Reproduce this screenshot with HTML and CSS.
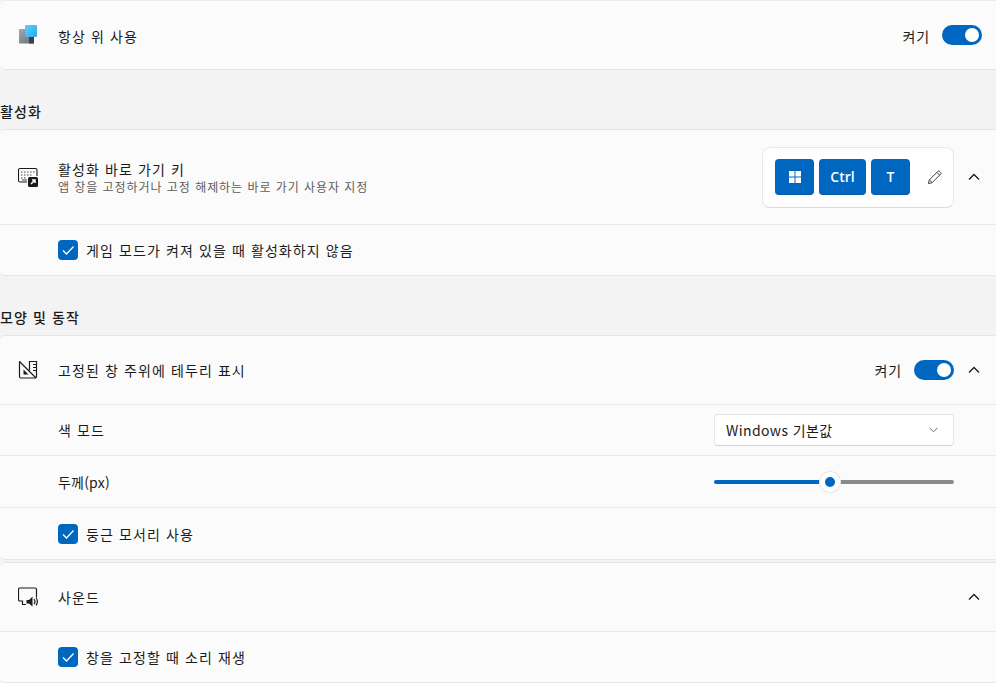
FILE: index.html
```html
<!DOCTYPE html>
<html lang="ko">
<head>
<meta charset="utf-8">
<title>항상 위 사용</title>
<link rel="stylesheet" href="styles.css">
</head>
<body>
<main class="page">
  <section class="card first">
    <div class="row h68">
      <svg class="icon" viewBox="0 0 20 20"><defs><linearGradient id="g1" x1="0" y1="0" x2="1" y2="1"><stop offset="0" stop-color="#a3a8ad"/><stop offset="1" stop-color="#6a6e73"/></linearGradient><linearGradient id="g2" x1="0" y1="0" x2="1" y2="1"><stop offset="0" stop-color="#5fd0fb"/><stop offset="1" stop-color="#2aa8ec"/></linearGradient></defs><rect x="1" y="4" width="15" height="14.500" rx="1" fill="url(#g1)"/><rect x="11" y="11" width="5" height="7.500" fill="#3d3f42"/><rect x="7" y="0" width="12" height="12" rx="1" fill="url(#g2)"/></svg>
      <span class="title nudge">항상 위 사용</span>
      <span class="spacer"></span>
      <span class="state nudge">켜기</span>
      <span class="toggle end"></span>
    </div>
  </section>

  <h2 class="heading">활성화</h2>
  <section class="card">
    <div class="row h95 line">
      <svg class="icon" viewBox="0 0 20 20" fill="none"><path d="M9 15H2a1.500 1.500 0 0 1-1.500-1.500V3A1.500 1.500 0 0 1 2 1.500h15.500A1.500 1.500 0 0 1 19 3v6" stroke="#1b1b1b" stroke-width="1.100"/><path d="M3 5h1.500M6 5h1.500M9 5h1.500M12 5h1.500M15 5h1.500M3 8h1.500M6 8h1.500M9 8h1.500M12 8h1.500M3 11h1.500M6 11h1.500M4 13h5" stroke="#444"/><rect x="10" y="10" width="10" height="10" rx="1.500" fill="#1b1b1b"/><path d="M13 17l4-4M14 13h3v3" stroke="#fff" stroke-width="1.500"/></svg>
      <div class="stack">
        <span class="title">활성화 바로 가기 키</span>
        <span class="sub">앱 창을 고정하거나 고정 해제하는 바로 가기 사용자 지정</span>
      </div>
      <span class="spacer"></span>
      <div class="keys">
        <span class="key k39"><svg class="win" viewBox="0 0 12 12"><path d="M0 0h5.500v5.500H0zM6.500 0H12v5.500H6.500zM0 6.500h5.500V12H0zM6.500 6.500H12V12H6.500z" fill="#fff"/></svg></span>
        <span class="key k47">Ctrl</span>
        <span class="key k39">T</span>
        <svg class="pencil" viewBox="0 0 16 16" fill="none"><path d="M1.500 14.500l1-4L11.500 1.500a1.400 1.400 0 0 1 2 0l1 1a1.400 1.400 0 0 1 0 2L5.500 13.500zM2.500 10.500l3 3M10.500 2.500l3 3" stroke="#333"/></svg>
      </div>
      <svg class="chev" viewBox="0 0 12 8" fill="none"><path d="M1 6.500l5-5 5 5" stroke="#1b1b1b" stroke-width="1.300"/></svg>
    </div>
    <div class="row h50 sub-row">
      <span class="check"><svg viewBox="0 0 20 20" fill="none"><path d="M5 10.500l3.500 3.500 7-7.500" stroke="#fff" stroke-width="1.300"/></svg></span>
      <span class="title">게임 모드가 켜져 있을 때 활성화하지 않음</span>
    </div>
  </section>

  <h2 class="heading">모양 및 동작</h2>
  <section class="card">
    <div class="row h69 line">
      <svg class="icon" viewBox="0 0 20 20" fill="none"><path d="M1.500 1.500v15a1.500 1.500 0 0 0 1.500 1.500h14a1.500 1.500 0 0 0 1.500-1.500v-15h-7v9" stroke="#1b1b1b" stroke-width="1.200"/><path d="M1.500 1.500l16.500 16.500M15 4.500h3M15 7.500h3M15 10.500h3" stroke="#1b1b1b" stroke-width="1.200"/><path d="M5.500 9.500l5 5h-5z" fill="#1b1b1b"/></svg>
      <span class="title">고정된 창 주위에 테두리 표시</span>
      <span class="spacer"></span>
      <span class="state">켜기</span>
      <span class="toggle"></span>
      <svg class="chev" viewBox="0 0 12 8" fill="none"><path d="M1 6.500l5-5 5 5" stroke="#1b1b1b" stroke-width="1.300"/></svg>
    </div>
    <div class="row h51 line plain">
      <span class="title">색 모드</span>
      <span class="spacer"></span>
      <div class="select"><span>Windows 기본값</span><svg class="small-chev" viewBox="0 0 10 6" fill="none"><path d="M.5 .5L5 5 9.500 .5" stroke="#555"/></svg></div>
    </div>
    <div class="row h52 line plain">
      <span class="title narrow">두께(px)</span>
      <span class="spacer"></span>
      <div class="slider"><span class="fill"></span><span class="thumb"></span><span class="rest"></span></div>
    </div>
    <div class="row h51 sub-row">
      <span class="check"><svg viewBox="0 0 20 20" fill="none"><path d="M5 10.500l3.500 3.500 7-7.500" stroke="#fff" stroke-width="1.300"/></svg></span>
      <span class="title">둥근 모서리 사용</span>
    </div>
  </section>

  <section class="card next">
    <div class="row h69 line">
      <svg class="icon" viewBox="0 0 20 20" fill="none"><path d="M18.500 10V2.500A1.500 1.500 0 0 0 17 1H2A1.500 1.500 0 0 0 .5 2.500v10A1.500 1.500 0 0 0 2 14h2.500v3.500H8" stroke="#1b1b1b" stroke-width="1.200"/><path d="M8.500 13h2.500l3.500-3.500V19.500L11 16.500H8.500z" fill="#1b1b1b"/><path d="M16 12a4 4 0 0 1 0 5M18 10.500a7 7 0 0 1 0 8" stroke="#1b1b1b" stroke-width="1.200"/></svg>
      <span class="title">사운드</span>
      <span class="spacer"></span>
      <svg class="chev" viewBox="0 0 12 8" fill="none"><path d="M1 6.500l5-5 5 5" stroke="#1b1b1b" stroke-width="1.300"/></svg>
    </div>
    <div class="row h50 sub-row">
      <span class="check"><svg viewBox="0 0 20 20" fill="none"><path d="M5 10.500l3.500 3.500 7-7.500" stroke="#fff" stroke-width="1.300"/></svg></span>
      <span class="title">창을 고정할 때 소리 재생</span>
    </div>
  </section>
</main>
</body>
</html>
```
FILE: styles.css
```css
* { box-sizing: border-box; }
html, body { margin: 0; height: 683px; overflow: hidden; }
body {
  background: #f3f3f3;
  color: #1b1b1b;
  font-family: "Noto Sans CJK KR", "Noto Sans", sans-serif;
  font-size: 14px;
}
.page { width: 1010px; }
.card {
  background: #fbfbfb;
  border: 1px solid #e6e6e6;
  border-left: 0;
  border-radius: 5px;
}
.card.first { border-top-color: #ececec; }
.card.next { margin-top: 2px; }
.row {
  display: flex;
  align-items: center;
  padding-left: 18px;
  padding-right: 14px;
}
.h50 { height: 50px; }
.h51 { height: 51px; }
.h52 { height: 52px; }
.h68 { height: 68px; }
.h69 { height: 69px; }
.h95 { height: 95px; }
.line { border-bottom: 1px solid #e8e8e8; }
.plain, .sub-row { padding-left: 58px; }
.heading {
  margin: 0;
  height: 59px;
  padding-top: 31px;
  font-size: 14px;
  font-weight: 500;
  line-height: 20px;
  letter-spacing: 1.1px;
}
.icon { width: 20px; height: 20px; flex: none; margin-right: 20px; }
.title { letter-spacing: 1.1px; line-height: 20px; font-size: 14px; white-space: nowrap; }
.narrow { letter-spacing: .2px; }
.nudge { padding-top: 1px; }
.stack { display: flex; flex-direction: column; }
.stack .title { line-height: 19px; }
.sub { font-size: 12px; line-height: 15px; color: #5d5d5d; letter-spacing: .95px; white-space: nowrap; }
.spacer { flex: 1; }
.state { letter-spacing: .9px; margin-right: 12px; }
.toggle {
  width: 40px;
  height: 20px;
  border-radius: 10px;
  background: #0067c0;
  position: relative;
  flex: none;
}
.toggle::after {
  content: "";
  position: absolute;
  right: 3px;
  top: 3px;
  width: 14px;
  height: 14px;
  border-radius: 50%;
  background: #fff;
}
.toggle.end { margin-right: 13px; }
.chev { width: 12px; height: 8px; flex: none; margin: 0 15px 0 14px; }
.keys {
  display: flex;
  align-items: center;
  width: 192px;
  height: 61px;
  padding-left: 12px;
  gap: 5px;
  background: #fff;
  border: 1px solid #e8e8e8;
  border-bottom-color: #dcdcdc;
  border-radius: 8px;
}
.key {
  height: 36px;
  display: flex;
  align-items: center;
  justify-content: center;
  background: #0067c0;
  border-radius: 4px;
  border-bottom: 1px solid #0a5aa5;
  color: #fff;
  font-family: "Open Sans", "Noto Sans", sans-serif;
  font-weight: 600;
  font-size: 14px;
}
.k39 { width: 39px; }
.k47 { width: 47px; }
.win { width: 12px; height: 12px; }
.pencil { width: 15px; height: 15px; margin-left: 12px; }
.check {
  width: 20px;
  height: 20px;
  flex: none;
  background: #0067c0;
  border-radius: 4px;
  margin-right: 8px;
}
.check svg { display: block; width: 20px; height: 20px; }
.select {
  width: 240px;
  height: 32px;
  margin-right: 41px;
  padding: 0 15px 0 11px;
  display: flex;
  align-items: center;
  justify-content: space-between;
  background: #fff;
  border: 1px solid #e6e6e6;
  border-bottom-color: #d2d2d2;
  border-radius: 4px;
  letter-spacing: .4px;
}
.small-chev { width: 9px; height: 6px; }
.slider {
  width: 240px;
  margin-right: 41px;
  display: flex;
  align-items: center;
}
.fill { width: 106px; height: 4px; background: #0067c0; border-radius: 2px 0 0 2px; }
.rest { flex: 1; height: 4px; background: #8a8a8a; border-radius: 0 2px 2px 0; }
.thumb {
  width: 20px;
  height: 20px;
  border-radius: 50%;
  background: #fff;
  border: 5px solid #fff;
  box-shadow: 0 0 0 1px #e8e8e8;
  position: relative;
  flex: none;
}
.thumb::after {
  content: "";
  position: absolute;
  inset: 0;
  border-radius: 50%;
  background: #0067c0;
}
```
